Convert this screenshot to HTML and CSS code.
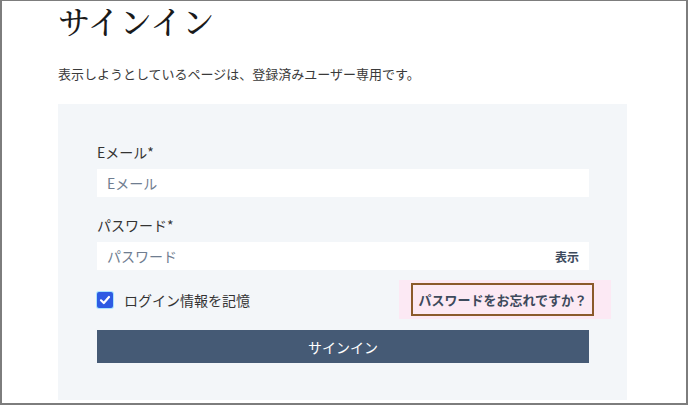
FILE: index.html
```html
<!DOCTYPE html>
<html lang="ja">
<head>
<meta charset="utf-8">
<link rel="stylesheet" href="styles.css">
</head>
<body>
<div class="frame">
  <h1 class="title">サインイン</h1>
  <p class="lead">表示しようとしているページは、登録済みユーザー専用です。</p>
  <div class="panel">
    <label class="label">Eメール*</label>
    <div class="input"><span class="placeholder">Eメール</span></div>
    <label class="label label-gap">パスワード*</label>
    <div class="input"><span class="placeholder">パスワード</span><span class="show">表示</span></div>
    <div class="row">
      <div class="remember">
        <span class="check"><svg width="12" height="12" viewBox="0 0 12 12"><path d="M2 6.3 L4.8 9 L10 3" fill="none" stroke="#fff" stroke-width="2.2" stroke-linecap="round" stroke-linejoin="round"/></svg></span>
        <span class="remember-text">ログイン情報を記憶</span>
      </div>
      <span class="highlight"><a class="forgot">パスワードをお忘れですか？</a></span>
    </div>
    <div class="button">サインイン</div>
  </div>
</div>
</body>
</html>
```
FILE: styles.css
```css
html, body {
  margin: 0;
  padding: 0;
  background: #fff;
}
.frame {
  width: 688px;
  height: 405px;
  box-sizing: border-box;
  border: 2px solid #7d7d7d;
  border-top-width: 1px;
  padding-left: 56px;
  overflow: hidden;
  font-family: "Noto Sans CJK JP", "Noto Sans", sans-serif;
  color: #333;
}
.title {
  margin: 0;
  font-family: "Noto Serif CJK JP", "IPAMincho", "Liberation Serif", serif;
  font-weight: 500;
  font-size: 32px;
  line-height: 39px;
  color: #1a1a1a;
}
.lead {
  margin: 24px 0 0;
  font-size: 13px;
  line-height: 20px;
  color: #3a3a3a;
}
.panel {
  margin-top: 20px;
  width: 569px;
  height: 296px;
  box-sizing: border-box;
  background: #f3f6f9;
  padding: 38px 38px 0 39px;
  display: flex;
  flex-direction: column;
}
.label {
  display: block;
  font-size: 14px;
  line-height: 20px;
  color: #333;
  margin-bottom: 7px;
}
.label-gap {
  margin-top: 18px;
}
.input {
  height: 28px;
  background: #fff;
  display: flex;
  align-items: center;
  justify-content: space-between;
  padding: 0 10px 0 10px;
}
.placeholder {
  font-size: 14px;
  color: #6f7d90;
}
.show {
  font-size: 12px;
  font-weight: 700;
  color: #3d4a5c;
}
.row {
  margin-top: 10px;
  height: 39px;
  display: flex;
  align-items: center;
  justify-content: space-between;
}
.remember {
  display: flex;
  align-items: center;
  gap: 11px;
}
.check {
  width: 16px;
  height: 16px;
  border-radius: 2px;
  background: #2d5be3;
  box-shadow: 0 0 0 1px #a9e4ff;
  display: flex;
  align-items: center;
  justify-content: center;
}
.remember-text {
  font-size: 14px;
  color: #333;
}
.highlight {
  background: #fce9f4;
  padding: 3px 17px 3px 12px;
  margin-right: -22px;
  display: flex;
}
.forgot {
  border: 2px solid #8b5a2b;
  padding: 0 5px 0 5px;
  height: 29px;
  display: flex;
  align-items: center;
  font-size: 13px;
  font-weight: 700;
  color: #3e4a5c;
}
.button {
  margin-top: 11px;
  height: 33px;
  background: #455a75;
  color: #fff;
  font-size: 14px;
  display: flex;
  align-items: center;
  justify-content: center;
}
```
